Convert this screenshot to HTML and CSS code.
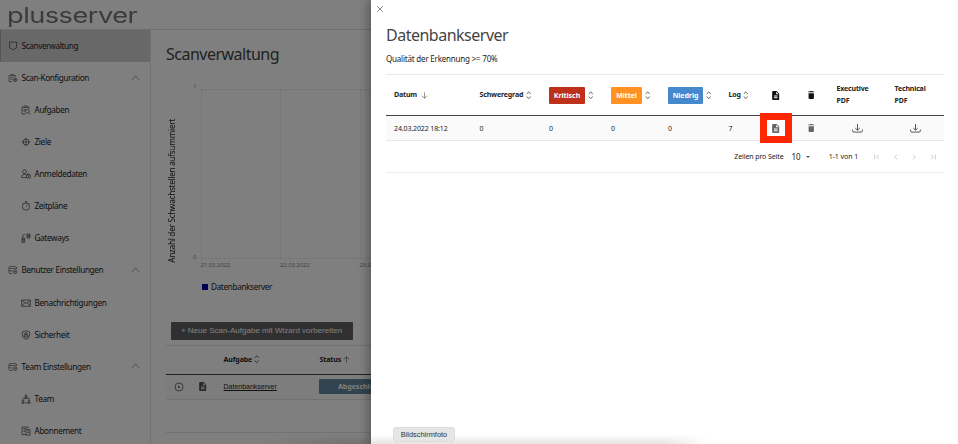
FILE: index.html
```html
<!DOCTYPE html>
<html lang="de">
<head>
<meta charset="utf-8">
<title>Scanverwaltung</title>
<link rel="stylesheet" href="styles.css">
</head>
<body>
<svg class="defs" width="0" height="0">
  <symbol id="sort" viewBox="0 0 6 9"><path d="M.8 3 3 .9 5.2 3M.8 6 3 8.1 5.2 6"/></symbol>
  <symbol id="doc" viewBox="0 0 16 20"><path fill="currentColor" stroke="none" fill-rule="evenodd" d="M2 0h8l6 6v12a2 2 0 0 1-2 2H2a2 2 0 0 1-2-2V2a2 2 0 0 1 2-2Zm7 1.500V7h5.500ZM4 10v2h8v-2Zm0 4v2h8v-2Z"/></symbol>
  <symbol id="trash" viewBox="0 0 14 18"><path fill="currentColor" stroke="none" d="M1 5h12v11a2 2 0 0 1-2 2H3a2 2 0 0 1-2-2ZM0 1h3.500l1-1h5l1 1H14v2H0Z"/></symbol>
  <symbol id="download" viewBox="0 0 11 9"><path d="M5.500 0v6M3.200 4 5.500 6.200 7.800 4M.6 5.500v1.300q0 1.300 1.300 1.300h7.200q1.300 0 1.300-1.300V5.500"/></symbol>
  <symbol id="chevron" viewBox="0 0 9 6"><path d="M.5 5.500 4.500.7l4 4.800"/></symbol>
  <symbol id="stack" viewBox="0 0 11 10"><path d="M9.500 4V2.200Q9.500 1 5.300 1T1 2.200V8q0 1 4 1M1 2.200q0 1.300 4.300 1.300t4.200-1.300M1 5q0 1.200 4 1.200"/><circle cx="7.900" cy="6.900" r="2"/><circle cx="7.900" cy="6.900" r=".5"/></symbol>
</svg>
<div class="app">
  <header class="topbar"><span class="logo">plusserver</span></header>
  <div class="body">
    <nav class="sidebar">
      <a class="item active"><svg viewBox="0 0 10 10"><path d="M3.500 1H1.500v5.500q0 .8 1.500 1M6.500 1h2v5.500q0 .8-1.500 1M3.500 1h3M3.200 7.500 5 9l1.800-1.500"/></svg><span>Scanverwaltung</span></a>
      <a class="item group"><svg viewBox="0 0 11 10"><path d="M5 9H1.200V2.200h2M6 2.200h2v1.600M3.200 2.700V1.200H6v1.500ZM2.700 4.700h3M2.700 6.500h2"/><circle cx="7.900" cy="6.900" r="2"/><path d="M6.600 6.900h2.600M7.900 5.600v2.600"/></svg><span>Scan-Konfiguration</span><svg class="chev"><use href="#chevron"/></svg></a>
      <a class="item sub"><svg viewBox="0 0 10 10"><path d="M4.500 9H1V2h2M6 2h2v2M3 2.500V1h3v1.500ZM2.500 4.500h2M2.500 6h1.500"/><circle cx="6.300" cy="6.300" r="1.900"/><path d="m7.700 7.700 1.500 1.600"/></svg><span>Aufgaben</span></a>
      <a class="item sub"><svg viewBox="0 0 10 10"><circle cx="5" cy="5" r="3"/><circle cx="5" cy="5" r="1.200"/><path d="M5 .8v2M5 7.200v2M.8 5h2M7.200 5h2"/></svg><span>Ziele</span></a>
      <a class="item sub"><svg viewBox="0 0 10 10"><circle cx="3.500" cy="2.700" r="1.900"/><path d="M5 8.500H.7V7q0-1.500 2.800-1.500H5M5.500 6h3.700v3H5.500ZM6.300 6V5h2v1M7.400 7v1"/></svg><span>Anmeldedaten</span></a>
      <a class="item sub"><svg viewBox="0 0 10 10"><circle cx="5" cy="5.600" r="3.600"/><path d="M5 2V.6M3.800.6h2.400M5 5.600 6.700 4M8 2.200l.8.8M2 2.200l-.8.8"/></svg><span>Zeitpläne</span></a>
      <a class="item sub"><svg viewBox="0 0 10 10"><path d="M1 5h2.700v4.300H1ZM1 6.500h2.700M1 8h2.700M6 1h3v4H6ZM6 2.300h3M6 3.700h3M1.800 5V3q0-1.500 1.500-1.500h1"/></svg><span>Gateways</span></a>
      <a class="item group"><svg viewBox="0 0 11 10"><use href="#stack"/></svg><span>Benutzer Einstellungen</span><svg class="chev"><use href="#chevron"/></svg></a>
      <a class="item sub"><svg viewBox="0 0 10 10"><path d="M.7 2h8.600v6.300H.7ZM.7 2.300 5 5.500l4.300-3.200M.7 8l3-3.200M9.300 8l-3-3.200"/></svg><span>Benachrichtigungen</span></a>
      <a class="item sub"><svg viewBox="0 0 10 10"><path d="M5 .7 8.700 2v3Q8.700 8 5 9.400 1.300 8 1.300 5V2Z"/><path d="M3.300 4.500h3.400V7H3.300ZM4 4.500V3q1-1 2 0v1.500M5 5.200v1"/></svg><span>Sicherheit</span></a>
      <a class="item group"><svg viewBox="0 0 11 10"><use href="#stack"/></svg><span>Team Einstellungen</span><svg class="chev"><use href="#chevron"/></svg></a>
      <a class="item sub"><svg viewBox="0 0 10 10"><circle cx="5" cy="1.800" r="1"/><path d="M3.300 4.600q0-1.500 1.700-1.500t1.700 1.500ZM2.500 3.500 1.500 5.500M7.500 3.500l1 2M4 8.700h2"/><circle cx="2" cy="6.700" r=".8"/><circle cx="8" cy="6.700" r=".8"/><path d="M.7 9.200q0-1.300 1.300-1.300t1.300 1.300ZM6.700 9.200q0-1.300 1.300-1.300t1.300 1.300Z"/></svg><span>Team</span></a>
      <a class="item sub"><svg viewBox="0 0 10 10"><path d="M5 8.500H1V1h6v1M2.500 2.500h3M2.500 4h1.500M2.500 5.500H4M5 3.500h4v6L8 8.700 7 9.500 6 8.700 5 9.300ZM6.200 5H8M6.200 6.500H8"/></svg><span>Abonnement</span></a>
    </nav>
    <main class="main">
      <h1>Scanverwaltung</h1>
      <div class="chart">
        <div class="ytitle"><span>Anzahl der Schwachstellen aufsummiert</span></div>
        <div class="yaxis"><span>1</span><span>0</span></div>
        <div class="plot">
          <div class="cells"><i></i><i></i><i></i></div>
          <div class="xaxis"><span>21.03.2022</span><span>22.03.2022</span><span>23.03.2022</span></div>
        </div>
      </div>
      <div class="legend"><i></i><span>Datenbankserver</span></div>
      <button class="wizard"><span>+ Neue Scan-Aufgabe mit Wizard vorbereiten</span></button>
      <div class="tasks">
        <div class="thead"><b></b><b></b><b><span>Aufgabe</span><svg class="sort"><use href="#sort"/></svg></b><b><span>Status</span><svg class="arrow" viewBox="0 0 8 8"><path d="M4 7.500V1M1 3.700 4 .8l3 2.900"/></svg></b></div>
        <div class="trow">
          <span><svg class="play" viewBox="0 0 10 10"><circle cx="5" cy="5" r="4"/><path d="M4.200 3.600v2.800L6.400 5Z" fill="currentColor" stroke="none"/></svg></span>
          <span><svg class="doc"><use href="#doc"/></svg></span>
          <a>Datenbankserver</a>
          <span class="status">Abgeschlossen</span>
        </div>
        <div class="tfoot"></div>
      </div>
    </main>
  </div>
</div>
<div class="scrim"></div>
<aside class="drawer">
  <svg class="close" viewBox="0 0 8 8"><path d="m1.200 1.200 5.600 5.600M6.800 1.200 1.200 6.800"/></svg>
  <h2>Datenbankserver</h2>
  <p>Qualität der Erkennung &gt;= 70%</p>
  <section class="reports">
    <div class="row head">
      <div class="wide"><span>Datum</span><svg class="arrow" viewBox="0 0 8 8"><path d="M4 .5V7M1 4.300 4 7.200l3-2.900"/></svg></div>
      <div><span>Schweregrad</span><svg class="sort"><use href="#sort"/></svg></div>
      <div><span class="tag critical">Kritisch</span><svg class="sort"><use href="#sort"/></svg></div>
      <div><span class="tag medium">Mittel</span><svg class="sort"><use href="#sort"/></svg></div>
      <div><span class="tag low">Niedrig</span><svg class="sort"><use href="#sort"/></svg></div>
      <div><span>Log</span><svg class="sort"><use href="#sort"/></svg></div>
      <div><svg class="doc"><use href="#doc"/></svg></div>
      <div><svg class="trash"><use href="#trash"/></svg></div>
      <div><span>Executive<br>PDF</span></div>
      <div><span>Technical<br>PDF</span></div>
    </div>
    <div class="row data">
      <div>24.03.2022 18:12</div><div>0</div><div>0</div><div>0</div><div>0</div><div>7</div>
      <div class="marked"><span class="marker"></span><svg class="doc"><use href="#doc"/></svg></div>
      <div><svg class="trash"><use href="#trash"/></svg></div>
      <div><svg class="download"><use href="#download"/></svg></div>
      <div><svg class="download"><use href="#download"/></svg></div>
    </div>
    <div class="pager">
      <span class="per">Zeilen pro Seite</span><span class="count">10</span><i class="caret"></i><span class="range">1-1 von 1</span>
      <svg viewBox="0 0 6 6"><path d="M.6.5v5M5 .8 2.500 3 5 5.200"/></svg>
      <svg viewBox="0 0 6 6"><path d="M4.200.8 1.700 3l2.500 2.200"/></svg>
      <svg viewBox="0 0 6 6"><path d="M1.800.8 4.300 3 1.800 5.200"/></svg>
      <svg viewBox="0 0 6 6"><path d="M5.400.5v5M1 .8 3.500 3 1 5.200"/></svg>
    </div>
  </section>
</aside>
<div class="dock-shade"></div>
<div class="tooltip">Bildschirmfoto</div>
</body>
</html>
```
FILE: styles.css
```css
* { box-sizing: border-box; }
body { margin: 0; width: 958px; height: 444px; overflow: hidden; position: relative; background: #fff; font-family: "Noto Sans", sans-serif; font-size: 8px; color: #222; }
svg { fill: none; stroke: currentColor; stroke-width: .8; flex: none; }
.defs { position: absolute; }
h1, h2, p { margin: 0; font-weight: 400; white-space: nowrap; }

.app { height: 444px; display: flex; flex-direction: column; }
.topbar { height: 30px; flex: none; border-bottom: 1px solid #dcdcdc; padding-left: 7px; }
.logo { display: inline-block; font-family: Inter, sans-serif; font-weight: 400; font-size: 21px; line-height: 31px; letter-spacing: -.4px; color: #777; transform: scaleX(1.295); transform-origin: 0 50%; }
.body { display: flex; flex: 1; min-height: 0; }

.sidebar { width: 151px; flex: none; border-right: 1px solid #e4e4e4; overflow: hidden; }
.item { height: 32.07px; display: flex; align-items: center; padding: 0 0 1px 8px; font-size: 8.2px; letter-spacing: -.34px; white-space: nowrap; }
.item > svg { width: 10px; height: 10px; margin: 1px 3.5px 0 0; color: #444; stroke-width: .7; }
.item.active { background: #d0d0d0; border-left: 1px solid #aaa; padding-left: 7px; }
.item.sub { padding-left: 21px; }
.item .chev { width: 9px; height: 6px; margin: 0 10px 0 auto; color: #888; }

.main { padding-left: 15px; flex: 1; }
h1 { font-size: 16px; line-height: 24px; margin-top: 12px; color: #444; letter-spacing: -.51px; }
.chart { display: flex; height: 200.5px; margin-top: 13px; }
.ytitle { width: 11px; height: 195px; margin-top: 14px; display: flex; align-items: center; justify-content: center; }
.ytitle span { writing-mode: vertical-rl; transform: rotate(180deg); font-size: 8.2px; letter-spacing: -.28px; white-space: nowrap; line-height: 11px; }
.yaxis { width: 23.5px; display: flex; flex-direction: column; justify-content: space-between; height: 179px; margin-top: 3px; text-align: right; padding-right: 4px; font-size: 6px; color: #999; line-height: 8px; }
.plot { width: 740px; padding-top: 10px; }
.cells { display: flex; height: 170px; border-top: 1px dotted #e0e0e0; border-bottom: 1px dotted #e0e0e0; }
.cells i { width: 79.5px; border-left: 1px dotted #e0e0e0; }
.xaxis { display: flex; font-size: 6px; color: #888; line-height: 13px; letter-spacing: -.1px; }
.xaxis span { width: 79.5px; }
.legend { display: flex; align-items: center; gap: 3px; margin-left: 36px; height: 14px; font-size: 8.2px; letter-spacing: -.35px; }
.legend i { width: 6px; height: 6px; background: #0000a0; }
.wizard { display: block; width: 182px; height: 18px; margin: 28px 0 0 4.5px; border: 0; border-radius: 1px; padding: 0; background: #606060; color: #fff; font: 8px "Liberation Sans", sans-serif; white-space: nowrap; }

.tasks { margin-top: 5px; border-top: 1px solid #e4e4e4; }
.thead, .trow { display: grid; grid-template-columns: 25px 32.5px 96px 100px; align-items: center; }
.thead { height: 29px; border-bottom: 1.5px solid #444; font-size: 7px; letter-spacing: -.1px; }
.thead b, .head > div { display: flex; align-items: center; gap: 2px; }
.sort { width: 5.5px; height: 8.5px; }
.arrow { width: 7px; height: 7px; color: #666; }
.trow { height: 25px; padding-left: 8px; grid-template-columns: 25px 24.5px 95.5px 100px; background: #fafafa; border-bottom: 1px solid #e4e4e4; }
.trow a { text-decoration: underline; font: 7px "Liberation Sans", sans-serif; text-decoration: underline; }
.trow svg { display: block; color: #555; }
.tfoot { height: 33px; border-bottom: 1px solid #e4e4e4; }
.play { width: 10px; height: 10px; }
.doc { width: 7.5px; height: 9px; }
.trow .status { width: 95px; height: 15px; background: #6488a0; border-radius: 1px; color: #fff; font-weight: 700; font-size: 7px; line-height: 15px; padding-left: 19px; }
.scrim { position: absolute; inset: 0; background: rgba(0,0,0,.5); }

.drawer { position: absolute; top: 0; right: 0; bottom: 0; width: 587px; background: #fff; box-shadow: -3px 0 9px rgba(0,0,0,.3); padding: 5px 14px 0 15px; }
.close { display: block; width: 8px; height: 8px; margin-left: -10px; color: #666; }
h2 { font-size: 16px; line-height: 24px; margin-top: 10px; color: #444; letter-spacing: -.5px; }
p { font-size: 8px; line-height: 14px; margin-top: 5px; letter-spacing: -.2px; }
.reports { margin-top: 8px; border-top: 1px solid #e8e8e8; }
.row { display: grid; grid-template-columns: 85.5px 69.5px 62px 57px 60.5px 43.5px 36px 28.5px 58px 49px; padding-left: 8px; align-items: center; }
.head { height: 41px; border-bottom: 1.5px solid #444; font-size: 7px; font-weight: 700; line-height: 12px; letter-spacing: -.15px; }
.head .wide { gap: 4px; }
.data { height: 25px; background: #fafafa; border-bottom: 1px solid #e8e8e8; font-size: 7px; letter-spacing: -.12px; }
.data svg { display: block; color: #666; }
.head .sort { margin-left: .5px; }
.tag { width: 36px; height: 17px; border-radius: 1px; color: #fff; line-height: 17px; text-align: center; letter-spacing: -.05px; }
.tag.medium { width: 31px; background: #ff9222; }
.tag.critical { background: #bd301a; }
.tag.low { width: 35px; background: #4588ce; }
.head .doc, .head .trash { color: #111; }
.trash { width: 6.5px; height: 8px; }
.data .download { width: 11px; height: 9px; margin: 1px 0 0 15.5px; color: #333; }
.marked { position: relative; }
.marked svg { position: relative; }
.marker { position: absolute; left: -12.5px; top: -10.5px; width: 32.5px; height: 30px; border: 7.5px solid #ff2600; background: #fff; }
.pager { height: 32px; border-bottom: 1px solid #eee; display: flex; align-items: center; justify-content: flex-end; font-size: 7px; padding-right: 8px; }
.pager svg { width: 6px; height: 6px; color: #bbb; margin-left: 12.7px; stroke-width: .7; }
.per { letter-spacing: -.1px; }
.count { margin-left: 8px; font-size: 8px; }
.caret { border: 2px solid transparent; border-top-color: #555; border-bottom: 0; margin: 0 19px 0 5px; }
.range { margin-right: 3px; letter-spacing: -.05px; }

.dock-shade { position: absolute; left: 260px; bottom: 0; width: 450px; height: 10px; background: linear-gradient(transparent, rgba(0,0,0,.1)); -webkit-mask-image: linear-gradient(90deg, transparent, #000 20%, #000 90%, transparent); }
.tooltip { position: absolute; left: 393px; top: 427px; width: 62px; height: 15px; border-radius: 3px; background: #e6e6e6; border: 1px solid #ddd; font: 7.4px/13px "Liberation Sans", sans-serif; text-align: center; color: #333; }
.tooltip::after { content: ""; position: absolute; left: 28px; top: 14px; border: 3px solid transparent; border-top-color: #e6e6e6; border-bottom: 0; }
```
